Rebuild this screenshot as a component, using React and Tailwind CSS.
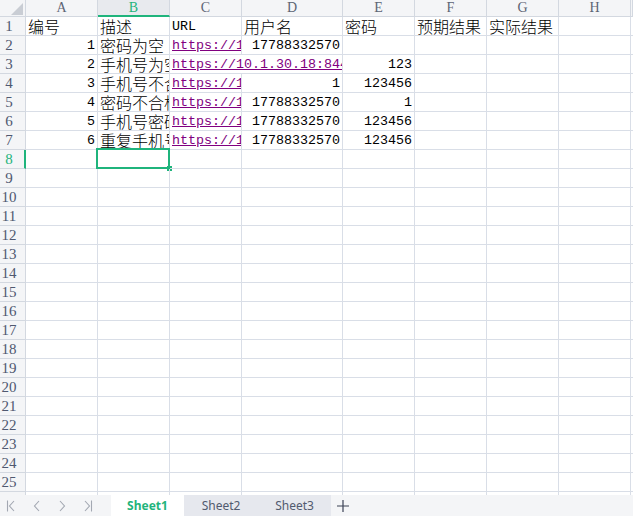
import React from "react";

const cjk = "font-['Noto_Sans_CJK_SC',sans-serif] text-[16px] font-light";
const mono = "font-['Liberation_Mono','Noto_Sans_CJK_SC',monospace] text-[13.33px]";
const grid = "border-r border-b border-[#d9dee7]";

const cols = ["A", "B", "C", "D", "E", "F", "G", "H", ""];

const url = "https://10.1.30.18:8443/user/register";

const data = [
  { A: ["编号", "t"], B: ["描述", "t"], C: ["URL", "u"], D: ["用户名", "t"], E: ["密码", "t"], F: ["预期结果", "t"], G: ["实际结果", "t"] },
  { A: ["1", "n"], B: ["密码为空", "t"], C: [url, "l"], D: ["17788332570", "n"] },
  { A: ["2", "n"], B: ["手机号为空", "t"], C: [url, "l", 2], E: ["123", "n"] },
  { A: ["3", "n"], B: ["手机号不合法", "t"], C: [url, "l"], D: ["1", "n"], E: ["123456", "n"] },
  { A: ["4", "n"], B: ["密码不合格", "t"], C: [url, "l"], D: ["17788332570", "n"], E: ["1", "n"] },
  { A: ["5", "n"], B: ["手机号密码正确", "t"], C: [url, "l"], D: ["17788332570", "n"], E: ["123456", "n"] },
  { A: ["6", "n"], B: ["重复手机号注册", "t"], C: [url, "l"], D: ["17788332570", "n"], E: ["123456", "n"] },
];

function Cell({ value, selected }) {
  if (!value) {
    return (
      <div className={`${grid} relative`}>
        {selected && (
          <div className="absolute left-[-2px] top-[-2px] w-[74px] h-[21px] border-2 border-[#1fb47c]">
            <div className="absolute right-[-4px] bottom-[-4px] w-[5px] h-[5px] bg-[#1fb47c]" />
          </div>
        )}
      </div>
    );
  }
  const [text, kind, span] = value;
  const spanCls = span === 2 ? "col-span-2" : "";
  if (kind === "n") {
    return (
      <div className={`${grid} ${spanCls} overflow-hidden whitespace-nowrap text-right pr-[2px] leading-[19px] text-black ${mono}`}>
        {text}
      </div>
    );
  }
  if (kind === "l") {
    return (
      <div className={`${grid} ${spanCls} overflow-hidden whitespace-nowrap pl-[2px] leading-[19px] text-[#800080] underline ${mono}`}>
        {text}
      </div>
    );
  }
  if (kind === "u") {
    return (
      <div className={`${grid} overflow-hidden whitespace-nowrap pl-[2px] leading-[19px] text-black ${mono}`}>
        {text}
      </div>
    );
  }
  return (
    <div className={`${grid} overflow-hidden whitespace-nowrap pl-[2px] leading-[19px] text-black ${cjk}`}>
      {text}
    </div>
  );
}

function Chevron({ dir, bar }) {
  return (
    <svg width="12" height="12" viewBox="0 0 12 12" fill="none" stroke="#a3a8b2" strokeWidth="1.1">
      {dir === "left" ? <path d="M8 1 L3.5 6 L8 11" /> : <path d="M4 1 L8.5 6 L4 11" />}
      {bar && (dir === "left" ? <path d="M1.5 0.5 V11.5" /> : <path d="M10.5 0.5 V11.5" />)}
    </svg>
  );
}

export default function App() {
  const rows = Array.from({ length: 26 }, (_, i) => i + 1);

  return (
    <div className="w-[633px] h-[516px] bg-white flex flex-col overflow-hidden">
      <div className="h-[495px] overflow-hidden">
        <div className="grid grid-cols-[26px_72px_72px_72px_101px_72px_72px_72px_72px_1fr] grid-rows-[17px_repeat(26,19px)]">
          {/* corner */}
          <div className="relative bg-[#f4f5f7] border-r border-b border-[#d3d8e0]">
            <svg className="absolute left-[11px] top-[3px]" width="12" height="12" viewBox="0 0 12 12">
              <polygon points="12,0 12,12 0,12" fill="#c9cdd4" />
            </svg>
          </div>
          {cols.map((c) => (
            <div
              key={c || "I"}
              className={`relative text-center leading-[16px] font-['Liberation_Serif',serif] text-[14px] border-r ${
                c === "B"
                  ? "bg-[#e8eaee] text-[#1fb47c] border-b-2 border-b-[#1fb47c] border-r-[#d3d8e0]"
                  : "bg-[#f4f5f7] text-[#5d6474] border-b border-[#d3d8e0]"
              }`}
            >
              {c}
            </div>
          ))}
          {rows.map((r) => {
            const rowData = data[r - 1] || {};
            const sel = r === 8;
            return (
              <React.Fragment key={r}>
                <div
                  className={`border-b border-[#d3d8e0] leading-[19px] font-['Liberation_Serif',serif] text-[15px] ${
                    sel
                      ? "bg-[#f4f5f7] text-[#1fb47c] border-r-2 border-r-[#1fb47c]"
                      : "bg-[#f4f5f7] text-[#4f5870] border-r"
                  }`}
                >
                  <div className="w-[18px] text-center">{r}</div>
                </div>
                <Cell value={rowData.A} />
                <Cell value={rowData.B} selected={sel} />
                <Cell value={rowData.C} />
                {rowData.C && rowData.C[2] === 2 ? null : <Cell value={rowData.D} />}
                <Cell value={rowData.E} />
                <Cell value={rowData.F} />
                <Cell value={rowData.G} />
                <Cell value={rowData.H} />
                <div className="border-b border-[#d9dee7]" />
              </React.Fragment>
            );
          })}
        </div>
      </div>

      <div className="h-[21px] bg-[#f4f5f7] flex items-center font-['Noto_Sans',sans-serif] text-[12px]">
        <div className="flex items-center w-[111px] pl-[6px] gap-[13px]">
          <Chevron dir="left" bar />
          <Chevron dir="left" />
          <Chevron dir="right" />
          <Chevron dir="right" bar />
        </div>
        <div className="h-full w-[73px] bg-white flex items-center justify-center font-bold text-[#1fb47c]">
          Sheet1
        </div>
        <div className="h-full w-[147px] bg-[#e6e8ee] flex items-center text-[#515a6e]">
          <div className="w-[74px] text-center">Sheet2</div>
          <div className="w-[73px] text-center">Sheet3</div>
        </div>
        <div className="pl-[6px] flex items-center">
          <svg width="12" height="12" viewBox="0 0 12 12" stroke="#3b4255" strokeWidth="1.2">
            <path d="M6 0 V12 M0 6 H12" />
          </svg>
        </div>
      </div>
    </div>
  );
}
